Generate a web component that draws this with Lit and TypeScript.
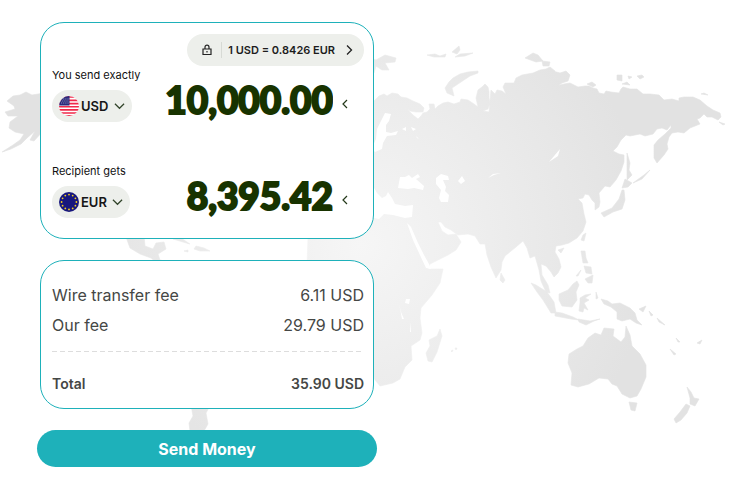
import { LitElement, html, svg, css } from "lit";
import { customElement, property } from "lit/decorators.js";

const LAND = [
  // Europe and Asia
  "M350 120L366 108L374 101L379 96L384 94L387 96L392 93L398 94L401 97L407 98L413 101L420 104L424 108L423 112L416 112L410 111L407 109L413 115L418 119L421 116L423 113L427 112L430 109L429 104L434 104L435 109L438 106L443 103L448 102L454 104L460 102L461 99L468 100L474 104L478 107L476 98L478 90L482 87L485 84L488 87L489 92L489 98L490 103L488 109L483 111L489 112L490 100L491 90L495 94L497 90L502 91L506 94L503 87L505 83L514 83L516 78L522 75L533 73L540 70L546 69L550 67L555 71L555 86L560 85L564 84L570 83L578 87L585 86L589 86L593 88L597 89L599 93L604 94L606 91L611 92L619 93L621 89L623 87L630 89L637 89L643 94L650 94L659 95L664 100L672 99L679 101L679 98L684 97L693 97L700 100L707 106L713 110L720 113L721 117L718 120L712 117L707 117L704 114L700 118L697 119L700 124L695 126L690 128L684 133L678 132L672 133L669 137L667 144L668 149L664 155L657 163L654 158L654 145L658 140L665 134L671 128L671 125L667 130L662 128L657 129L653 134L645 136L640 134L630 136L626 135L621 140L617 147L613 151L619 154L624 155L624 162L621 171L616 180L610 187L605 186L599 193L600 202L599 207L595 210L595 203L592 200L589 195L585 194L583 198L578 199L582 203L584 214L586 222L583 231L577 238L569 243L562 245L556 246L555 252L559 259L561 267L558 273L554 277L551 272L546 266L541 264L542 275L548 285L550 293L546 292L541 281L539 270L535 256L530 258L527 248L523 241L516 247L505 256L502 262L501 270L496 278L491 267L487 255L485 244L480 244L475 236L468 234L458 235L451 230L445 227L441 222L438 222L442 231L448 235L456 234L461 242L456 250L448 255L430 264L428 269L443 269L440 283L432 295L421 308L420 318L422 333L420 340L411 346L412 360L405 367L400 379L393 383L380 386L375 380L370 365L362 345L363 300L340 290L317 280L307 264L308 238L316 222L330 212L350 210Z",
  // Alaska
  "M44 93L32 95L26 92L20 95L13 96L7 101L14 106L15 109L5 112L8 116L18 116L10 122L9 128L15 132L24 134L20 140L13 145L2 152L11 149L21 144L27 138L35 131L30 140L34 141L44 130Z",
  // Central America and the Caribbean
  "M126 237L130 248L140 254L151 258L157 263L166 270L178 272L170 262L160 260L158 254L166 249L164 242L156 243L153 249L145 246L144 236Z",
  "M173 239L181 238L190 244L183 242ZM184 251L188 250L188 252ZM194 249L196 246L204 248L210 251L200 251Z",
  // South America
  "M188 270L230 280L252 300L244 330L222 360L212 402L206 413L208 424L204 431L190 431L189 423L193 416L191 405L192 360L174 320Z",
  // Arctic islands
  "M366 56L376 60L385 55L396 58L395 62L385 63L389 70L382 70L376 66L374 73L364 72ZM427 55L435 54L440 56L446 54L445 57L434 57ZM452 52L459 46L460 50L457 54ZM460 54L473 53L465 56L455 57ZM525 58L533 53L538 55L543 61L536 62ZM542 61L550 62L549 66L543 66Z",
  "M478 71L468 72L460 74L453 78L449 82L445 88L447 93L454 96L452 88L461 82L470 76L478 73Z",
  "M553 71L560 73L566 71L570 75L568 81L562 83L556 87L552 83ZM587 84L592 82L596 85L593 87ZM617 75L622 75L622 81L617 80ZM628 76L632 77L629 79ZM637 76L642 75L644 77L640 79ZM622 84L627 82L630 85ZM701 94L704 93L708 95ZM719 122L725 124L723 125Z",
  // Sakhalin, Japan and Taiwan
  "M627 153L630 163L629 170L632 175L627 180ZM625 179L632 183L628 187L622 188ZM624 190L625 200L622 209L613 212L604 217L601 213L612 208L619 199L622 190ZM633 183L644 175L650 170L642 179ZM583 235L586 233L584 241L581 240ZM558 250L564 248L561 253Z",
  // Philippines
  "M581 251L585 251L586 258L588 263L583 263ZM584 266L591 267L592 274L586 273ZM576 276L581 270L578 276ZM585 279L593 275L592 283L588 283Z",
  // Indonesia and New Guinea
  "M531 283L536 285L547 292L554 302L556 313L551 313L543 300L537 292ZM555 312L562 313L573 317L579 320L571 319L555 316ZM578 319L590 321L600 319L594 321L586 325L579 322ZM559 294L568 290L573 284L577 281L579 285L576 292L577 300L572 307L562 306L559 300Z",
  "M580 298L585 295L591 294L585 298L589 300L584 303L588 310L584 308L583 312L579 311L580 303ZM596 292L598 298L596 299ZM601 299L608 301L612 304L620 303L630 308L635 313L637 320L642 325L636 323L630 319L622 321L617 319L617 312L611 307L604 304ZM639 309L646 306L643 312ZM649 311L653 315L651 316ZM657 318L665 325L659 322Z",
  // Australia and Tasmania
  "M569 354L577 349L583 346L588 338L595 333L601 335L604 328L614 329L613 336L621 342L625 337L626 326L630 335L632 346L640 354L646 365L646 377L641 389L637 396L630 398L622 394L617 386L612 384L608 379L599 378L589 384L578 387L571 385L572 373L568 363ZM629 402L637 403L635 411L631 410Z",
  // New Zealand and nearby islands
  "M687 387L691 392L694 398L699 399L695 406L690 404L690 398ZM686 404L690 406L687 413L681 420L676 423L674 419L680 412ZM670 349L676 354L674 355ZM676 338L680 342L678 342ZM697 343L702 340L700 344Z",
  // Madagascar and Sri Lanka
  "M440 329L442 336L437 352L432 362L428 361L426 353L430 346L429 340L437 336ZM501 273L505 280L503 283L500 280ZM451 351L453 350L452 352ZM455 348L457 348L456 350Z",
].join("");

const WATER = [
  // Mediterranean
  "M366 184L373 186L377 193L382 198L386 196L388 192L392 198L395 204L405 206L413 205L412 217L405 218L393 215L384 214L379 219L374 218L366 222Z",
  // Baltic
  "M385 113L391 114L389 121L386 125L386 132L391 133L398 131L396 135L387 136L383 143L382 149L375 152L372 148L376 139L377 129Z",
  "M402 129L406 127L406 131ZM411 127L416 129L413 131ZM416 136L419 139L417 138Z",
  // Black, Caspian and Aral seas
  "M400 177L405 177L409 175L412 178L418 174L420 177L416 179L424 186L423 190L414 188L408 189L398 188ZM436 178L441 174L448 176L449 180L443 180L446 187L445 191L449 195L448 202L441 202L439 198L441 190L436 184ZM458 181L462 176L465 181L461 184Z",
  // Balkhash and Baikal
  "M488 178L493 174L501 173L494 175ZM549 162L560 149L558 156Z",
  // Red Sea
  "M407 223L411 227L418 243L424 255L429 264L431 269L426 268L419 253L413 240Z",
  // African lakes
  "M406 299L410 299L409 304L405 303ZM399 303L401 312L404 319L402 319ZM410 322L411 332L410 332Z",
].join("");

const STARS = Array.from({ length: 12 }, (_, i) => {
  const a = (i * Math.PI) / 6;
  return { x: 10 + 7.4 * Math.sin(a), y: 10 - 7.4 * Math.cos(a) };
});

const usFlag = svg`
  <defs><clipPath id="disc"><circle cx="10" cy="10" r="10"/></clipPath></defs>
  <g clip-path="url(#disc)">
    <rect width="20" height="20" fill="#fff"/>
    <path d="M0 1H20M0 4.4H20M0 7.6H20M0 10.8H20M0 13.9H20M0 17H20M0 19.8H20" stroke="#f0284a" stroke-width="1.6"/>
    <rect width="10.5" height="9.5" fill="#2b2a7c"/>
    <path d="M2 3H10M1 5H10M2 7H10" stroke="#fff" stroke-width=".7" stroke-dasharray=".7 1.2"/>
  </g>`;

const euFlag = svg`
  <circle cx="10" cy="10" r="10" fill="#17177d"/>
  ${STARS.map((s) => svg`<circle cx=${s.x} cy=${s.y} r=".9" fill="#f5d020"/>`)}`;

@customElement("world-map")
export class WorldMap extends LitElement {
  static styles = css`
    :host { display: block; }
    .map { display: block; width: 100%; }
  `;
  render() {
    return html`<svg class="map" viewBox="0 0 740 489" aria-hidden="true">
      <defs>
        <radialGradient id="shade" gradientUnits="userSpaceOnUse" cx="360" cy="245" r="290">
          <stop offset="0" stop-color="#f6f6f6" />
          <stop offset="1" stop-color="#e2e2e2" />
        </radialGradient>
      </defs>
      <path d=${LAND} fill="url(#shade)" stroke="url(#shade)" stroke-width=".6" stroke-linejoin="round" />
      <path d=${WATER} fill="#fff" />
    </svg>`;
  }
}

@customElement("amount-field")
export class AmountField extends LitElement {
  @property() label = "";
  @property() currency = "USD";
  @property() amount = "";

  static styles = css`
    :host {
      display: grid;
      grid-template-columns: auto 1fr auto;
      grid-template-rows: 16px 32px;
      row-gap: 7px;
    }
    .label {
      grid-area: 1 / 1;
      white-space: nowrap;
      font-size: 11px;
      line-height: 16px;
      color: #111;
    }
    .pill {
      grid-area: 2 / 1;
      justify-self: start;
      display: flex;
      align-items: center;
      padding: 0 7px;
      border-radius: 16px;
      background: #edefeb;
    }
    .flag { width: 20px; height: 20px; margin-right: 2px; }
    .currency {
      appearance: none;
      border: 0;
      padding: 0;
      margin: 0 5px 0 0;
      background: none;
      font: 600 13px/20px Inter, sans-serif;
      color: #161616;
    }
    .down { width: 11px; height: 12px; }
    .value {
      grid-area: 1 / 2 / 3 / 3;
      align-self: end;
      width: 100%;
      min-width: 0;
      height: 44px;
      padding: 0;
      border: 0;
      background: none;
      text-align: right;
      font: 900 37px/44px Lato, sans-serif;
      color: #183300;
      -webkit-text-stroke: 2px #183300;
    }
    .more {
      grid-area: 2 / 3;
      align-self: start;
      display: flex;
      align-items: center;
      height: 28px;
      margin: 0 14px 0 7px;
      padding: 0;
      border: 0;
      background: none;
    }
    .left { width: 10px; height: 12px; }
  `;

  render() {
    return html`
      <label class="label" for="value">${this.label}</label>
      <label class="pill">
        <svg class="flag" viewBox="0 0 20 20" aria-hidden="true">
          ${this.currency === "USD" ? usFlag : euFlag}
        </svg>
        <select class="currency" aria-label="Currency">
          <option>${this.currency}</option>
        </select>
        <svg class="down" viewBox="0 0 12 12" fill="none" stroke="#31442a" stroke-width="1.3" aria-hidden="true">
          <path d="M1 3.5L6 8.5L11 3.5" />
        </svg>
      </label>
      <input class="value" id="value" inputmode="decimal" .value=${this.amount} />
      <button class="more" type="button" aria-label="Adjust amount">
        <svg class="left" viewBox="0 0 10 12" fill="none" stroke="#24391a" stroke-width="1.2">
          <path d="M7 2L3 6L7 10" />
        </svg>
      </button>
    `;
  }
}

@customElement("app-root")
export class AppRoot extends LitElement {
  static styles = css`
    :host {
      display: block;
      position: relative;
      min-height: 100vh;
      background: #fff;
      font-family: Inter, "Liberation Sans", sans-serif;
    }
    .backdrop { position: absolute; inset: 0 0 auto; }
    .panel {
      position: relative;
      display: flex;
      flex-direction: column;
      gap: 21px;
      max-width: 340px;
      padding: 22px 37px;
    }
    .card {
      margin: 0 3px;
      padding: 11px 9px 20px 11px;
      border: 1px solid #1eb1ba;
      border-radius: 24px;
      background: #fff;
    }
    .rate {
      display: flex;
      align-items: center;
      height: 32px;
      margin: 0 0 1px auto;
      padding: 0 9px 0 14px;
      border: 0;
      border-radius: 16px;
      background: #edefeb;
      font: 600 11px/16px Inter, sans-serif;
      color: #1c1c1c;
    }
    .lock { width: 12px; height: 12px; }
    .text {
      margin: 0 8px;
      padding-left: 6px;
      border-left: 1px solid #d7dad5;
    }
    .next { width: 12px; height: 12px; }
    .second { margin-top: 41px; }
    .fees { padding: 19px 9px 9px 11px; }
    .list { margin: 0; color: #454745; }
    .line {
      display: flex;
      justify-content: space-between;
      font-size: 16px;
      line-height: 30px;
    }
    .line dd { margin: 0; }
    .total {
      font-size: 14px;
      font-weight: 600;
      margin-top: 11px;
      padding-top: 18px;
      background: repeating-linear-gradient(90deg, #ddd 0 5px, transparent 5px 8px) top / 100% 1px no-repeat;
    }
    .send {
      height: 37px;
      border: 0;
      border-radius: 20px;
      background: #1eb1ba;
      color: #fff;
      font: 700 16px/20px Inter, sans-serif;
    }
  `;

  render() {
    return html`
      <world-map class="backdrop"></world-map>
      <main class="panel">
        <section class="card">
          <button class="rate" type="button">
            <svg class="lock" viewBox="0 0 12 12" fill="none" stroke="#222" stroke-width="1.2" aria-hidden="true">
              <path d="M2 5H10V10.5H2ZM4 5V3.2A2 2 0 0 1 8 3.2V5M6 7V8.5" />
            </svg>
            <span class="text">1 USD = 0.8426 EUR</span>
            <svg class="next" viewBox="0 0 12 12" fill="none" stroke="#222" stroke-width="1.3" aria-hidden="true">
              <path d="M4 1.5L8.5 6L4 10.5" />
            </svg>
          </button>
          <amount-field label="You send exactly" currency="USD" amount="10,000.00"></amount-field>
          <amount-field class="second" label="Recipient gets" currency="EUR" amount="8,395.42"></amount-field>
        </section>
        <section class="card fees">
          <dl class="list">
            <div class="line"><dt>Wire transfer fee</dt><dd>6.11 USD</dd></div>
            <div class="line"><dt>Our fee</dt><dd>29.79 USD</dd></div>
            <div class="line total"><dt>Total</dt><dd>35.90 USD</dd></div>
          </dl>
        </section>
        <button class="send" type="button">Send Money</button>
      </main>
    `;
  }
}
